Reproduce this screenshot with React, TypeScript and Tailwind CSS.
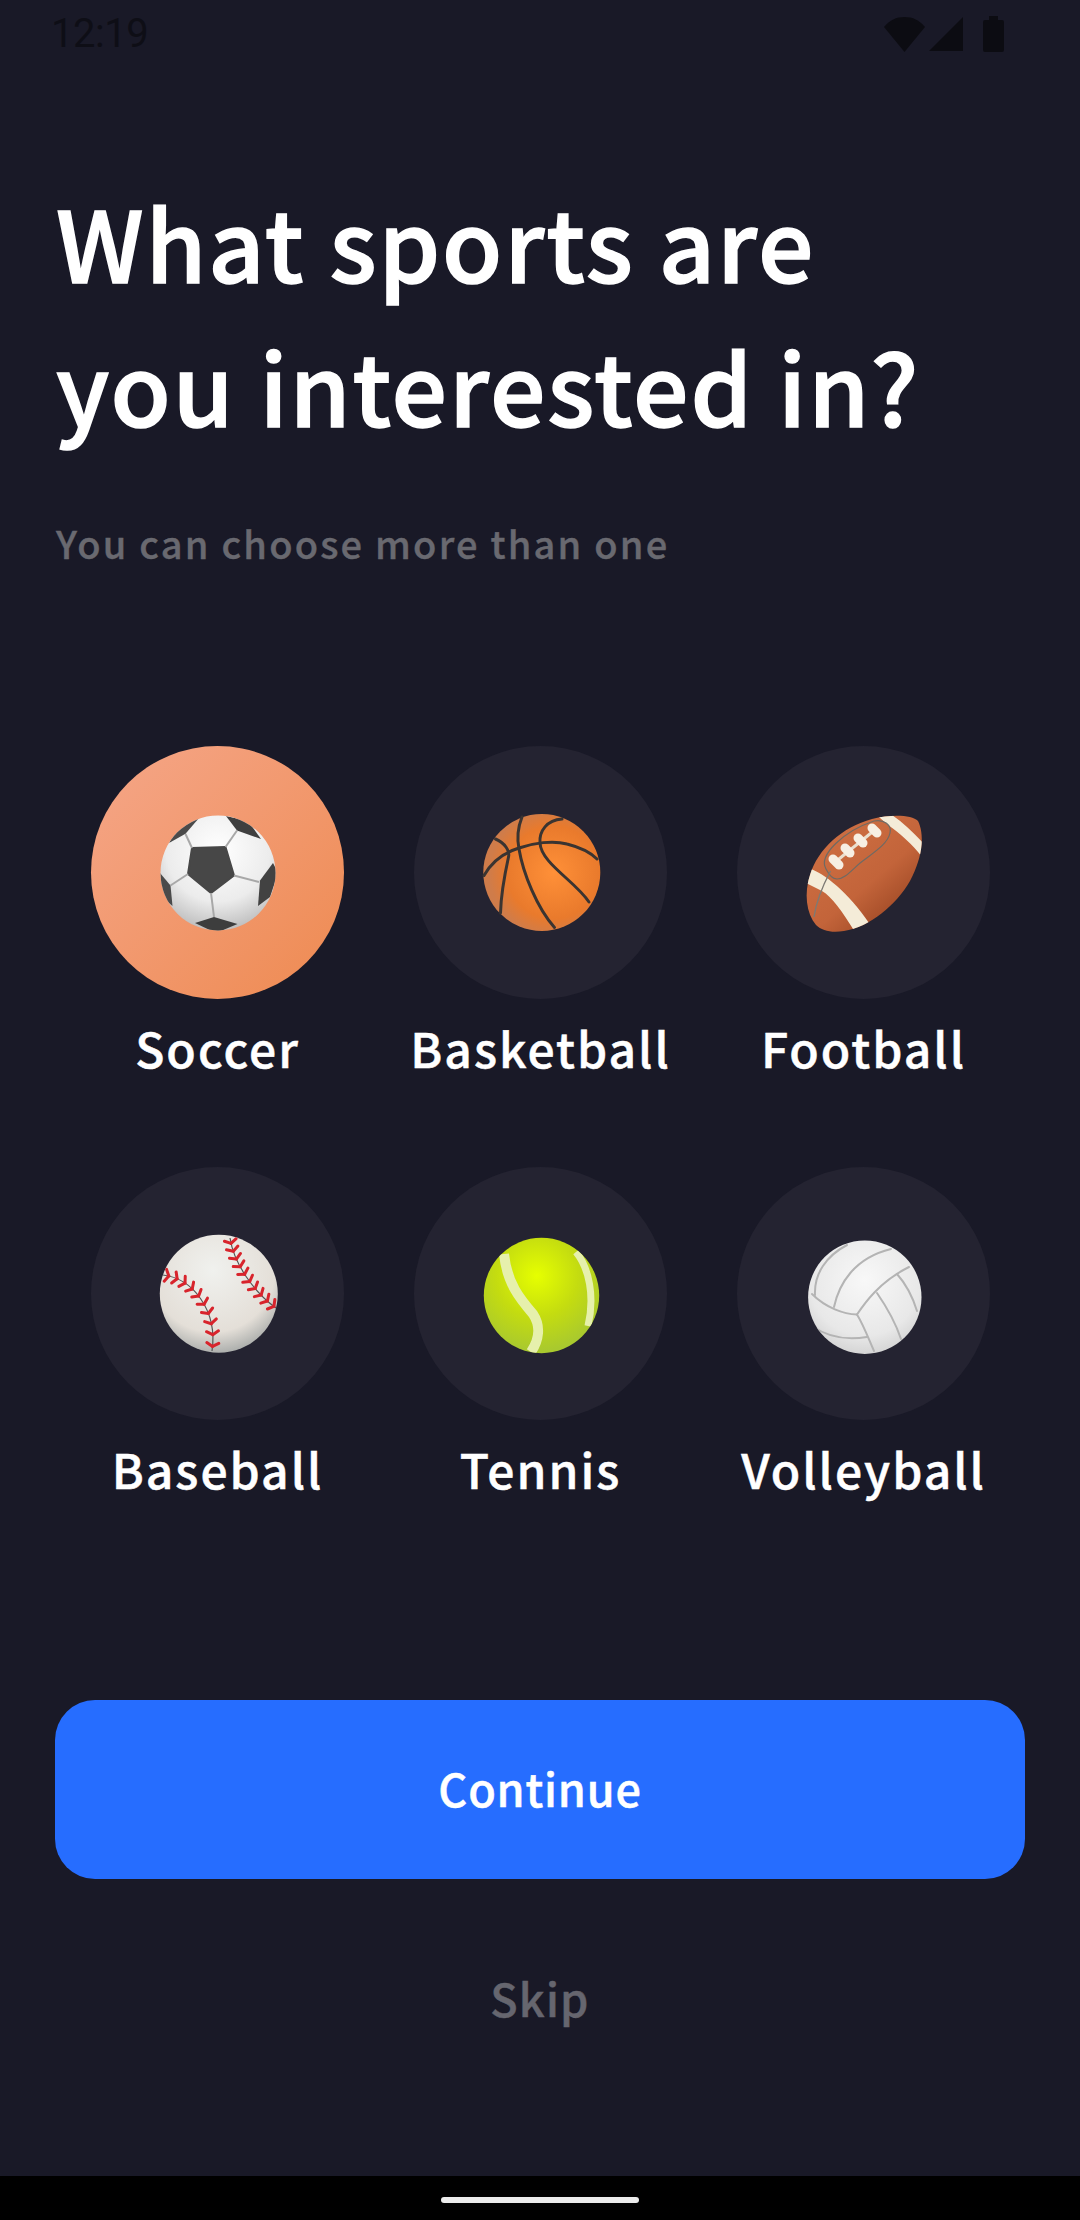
import React from "react";

function Soccer() {
  return (
    <svg viewBox="0 0 120 120" className="w-[120px] h-[120px] blur-[0.5px]">
      <defs>
        <radialGradient id="sg" cx="50%" cy="30%" r="75%">
          <stop offset="0%" stopColor="#ffffff" />
          <stop offset="60%" stopColor="#ececec" />
          <stop offset="100%" stopColor="#b5b5b5" />
        </radialGradient>
        <clipPath id="sc"><circle cx="60" cy="60" r="57.5" /></clipPath>
      </defs>
      <circle cx="60" cy="60" r="57.5" fill="url(#sg)" />
      <g clipPath="url(#sc)">
        <path d="M34 35 L67.5 34 L76 62.5 L53 80 L30 61 Z" fill="#474747" stroke="#474747" strokeWidth="2" strokeLinejoin="round" />
        <path d="M68 3 L79 17.5 L103 26 L90 8 Z" fill="#3f3f3f" />
        <path d="M41 5 L27.5 20.8 L11 30 L22 8 Z" fill="#4a4a4a" />
        <path d="M115 50 L102 67.5 L100 93 L112 84 L120 60 Z" fill="#424242" />
        <path d="M2 60 L12.5 72.5 L14.5 93 L4 84 Z" fill="#4a4a4a" />
        <path d="M37 110 L56 104 L79.5 111 L58 120 Z" fill="#3d3d3d" />
        <g stroke="#a8a8a8" strokeWidth="2" fill="none">
          <path d="M34 35 L27.5 21" />
          <path d="M67.5 34 L79 17.5" />
          <path d="M76 62.5 L101 69" />
          <path d="M53 80 L56 104" />
          <path d="M30 61 L12.5 72.5" />
        </g>
      </g>
    </svg>
  );
}

function Basketball() {
  return (
    <svg viewBox="0 0 120 120" className="w-[120px] h-[120px] blur-[0.4px]">
      <defs>
        <radialGradient id="bg" cx="60%" cy="50%" r="55%">
          <stop offset="0%" stopColor="#ff9038" />
          <stop offset="72%" stopColor="#e97a2c" />
          <stop offset="100%" stopColor="#cf7c4a" />
        </radialGradient>
      </defs>
      <circle cx="60.8" cy="59.5" r="58.5" fill="url(#bg)" />
      <g stroke="#3a3431" strokeWidth="3" fill="none" strokeLinecap="round">
        <path d="M3 62.5 C 10 50, 22 40, 38 35 C 52 30, 72 27, 86 31 C 98 34, 108 38, 116 46" />
        <path d="M41 4 C 37 14, 36 26, 38 36 C 42 60, 56 95, 73.5 114.5" />
        <path d="M81 6 C 66 7, 58 18, 59 30 C 60 50, 94 68, 108 89" />
        <path d="M14.5 26 C 24 30, 29 38, 27.5 44 C 24 60, 20 80, 19.5 100" />
      </g>
    </svg>
  );
}

const footballShape = "M12 112 C 2 100, 0 80, 6 62 C 14 36, 38 14, 68 6 C 88 1, 108 2, 114 8 C 120 20, 120 42, 106 68 C 92 92, 66 114, 40 118 C 28 120, 18 118, 12 112 Z";

function FootballBall() {
  return (
    <svg viewBox="0 0 120 120" className="w-[120px] h-[120px] blur-[0.4px]">
      <defs>
        <linearGradient id="fg" x1="20%" y1="15%" x2="80%" y2="85%">
          <stop offset="0%" stopColor="#cd6e42" />
          <stop offset="60%" stopColor="#c3643a" />
          <stop offset="100%" stopColor="#a04a26" />
        </linearGradient>
        <clipPath id="fc"><path d={footballShape} /></clipPath>
      </defs>
      <path d={footballShape} fill="url(#fg)" />
      <g clipPath="url(#fc)">
        <path d="M2 54 L4 54.8 C 20 60, 45 80, 65 110 L70 120 L52 120 L50 117.5 C 38 98, 28 84, 18 78 L0 69 Z" fill="#f4ecd8" />
        <path d="M71.5 1 L86.5 1 C 100 10, 112 22, 122 33 L122 50 C 112 34, 98 22, 84 12 Z" fill="#f4ecd8" />
        <path d="M22 56 C 14 42, 40 18, 70 8 C 80 6, 88 12, 86 20 C 84 30, 72 38, 60 47 C 50 54, 42 66, 33 66 C 28 66, 24 60, 22 56" fill="none" stroke="#6e6a64" strokeWidth="1.2" />
        <path d="M26.5 58 C 18 74, 12 90, 10 104" fill="none" stroke="#7d7a74" strokeWidth="1.4" />
        <path d="M30 50 L72 16" stroke="#eadfce" strokeWidth="3" />
        <g stroke="#f7efe3" strokeWidth="9" strokeLinecap="round">
          <path d="M29 46 L35 52" />
          <path d="M41 35 L46 40" />
          <path d="M54 25 L59 30" />
          <path d="M68 15 L73 20" />
        </g>
      </g>
    </svg>
  );
}

function bezierPoints(p: number[], n: number) {
  const out: { x: number; y: number; a: number }[] = [];
  for (let i = 0; i < n; i++) {
    const t = (i + 0.5) / n;
    const u = 1 - t;
    const x = u * u * u * p[0] + 3 * u * u * t * p[2] + 3 * u * t * t * p[4] + t * t * t * p[6];
    const y = u * u * u * p[1] + 3 * u * u * t * p[3] + 3 * u * t * t * p[5] + t * t * t * p[7];
    const dx = 3 * u * u * (p[2] - p[0]) + 6 * u * t * (p[4] - p[2]) + 3 * t * t * (p[6] - p[4]);
    const dy = 3 * u * u * (p[3] - p[1]) + 6 * u * t * (p[5] - p[3]) + 3 * t * t * (p[7] - p[5]);
    out.push({ x, y, a: Math.atan2(dy, dx) });
  }
  return out;
}

function Baseball() {
  const left = [5, 41, 34, 44, 60, 76, 54, 117];
  const right = [72, 4, 76, 30, 96, 58, 118, 74];
  const stitches = (p: number[], key: string) =>
    bezierPoints(p, 10).map((s, i) => {
      const nx = -Math.sin(s.a);
      const ny = Math.cos(s.a);
      const tx = Math.cos(s.a);
      const ty = Math.sin(s.a);
      return (
        <g key={key + i} stroke="#d8242c" strokeWidth="3" strokeLinecap="round">
          <line x1={s.x + nx * 6 - tx * 2} y1={s.y + ny * 6 - ty * 2} x2={s.x + tx * 1.5} y2={s.y + ty * 1.5} />
          <line x1={s.x - nx * 6 - tx * 2} y1={s.y - ny * 6 - ty * 2} x2={s.x + tx * 1.5} y2={s.y + ty * 1.5} />
        </g>
      );
    });
  return (
    <svg viewBox="0 0 120 120" className="w-[120px] h-[120px] blur-[0.5px]">
      <defs>
        <radialGradient id="bag" cx="45%" cy="30%" r="75%">
          <stop offset="0%" stopColor="#f0f1ee" />
          <stop offset="70%" stopColor="#e4dfd8" />
          <stop offset="100%" stopColor="#9fa3a2" />
        </radialGradient>
        <clipPath id="bac"><circle cx="60.8" cy="59.8" r="59" /></clipPath>
      </defs>
      <circle cx="60.8" cy="59.8" r="59" fill="url(#bag)" />
      <g clipPath="url(#bac)">
        <path d="M5 41 C 34 44, 60 76, 54 117" fill="none" stroke="#555" strokeWidth="1.2" />
        <path d="M72 4 C 76 30, 96 58, 118 74" fill="none" stroke="#555" strokeWidth="1.2" />
        {stitches(left, "l")}
        {stitches(right, "r")}
      </g>
    </svg>
  );
}

function Tennis() {
  return (
    <svg viewBox="0 0 120 120" className="w-[120px] h-[120px] blur-[0.5px]">
      <defs>
        <radialGradient id="tg" cx="46%" cy="33%" r="65%">
          <stop offset="0%" stopColor="#e6ff00" />
          <stop offset="55%" stopColor="#c4dc10" />
          <stop offset="100%" stopColor="#a9c92e" />
        </radialGradient>
        <clipPath id="tc"><circle cx="60.5" cy="61.5" r="57.7" /></clipPath>
      </defs>
      <circle cx="60.5" cy="61.5" r="57.7" fill="url(#tg)" />
      <g clipPath="url(#tc)" fill="none" stroke="#e6f0ac" strokeLinecap="butt">
        <path d="M23 20 C 26 50, 40 66, 52 80 C 60 92, 58 106, 50 118" strokeWidth="10" />
        <path d="M95 18 C 108 34, 114 62, 107 92" strokeWidth="7" />
      </g>
    </svg>
  );
}

function Volleyball() {
  return (
    <svg viewBox="0 0 120 120" className="w-[120px] h-[120px] blur-[0.5px]">
      <defs>
        <radialGradient id="vg" cx="50%" cy="35%" r="70%">
          <stop offset="0%" stopColor="#f8f8f8" />
          <stop offset="70%" stopColor="#e8e8e8" />
          <stop offset="100%" stopColor="#cfcfcf" />
        </radialGradient>
        <clipPath id="vc"><circle cx="60.8" cy="63.2" r="56.7" /></clipPath>
      </defs>
      <circle cx="60.8" cy="63.2" r="56.7" fill="url(#vg)" />
      <g clipPath="url(#vc)" fill="none" stroke="#b4b4b4" strokeWidth="2" strokeLinecap="round">
        <path d="M53 80.5 C 60 70, 75 48, 105 33" />
        <path d="M53 80.5 C 40 80, 22 74, 8 60" />
        <path d="M53 80.5 C 60 92, 65 106, 70 117" />
        <path d="M30 73 C 35 50, 50 24, 87 15" />
        <path d="M11 61 C 10 40, 22 22, 43 11" />
        <path d="M73 59 C 82 72, 92 90, 97 105" />
        <path d="M93 40 C 102 50, 109 64, 113 77" />
        <path d="M8 92 C 25 104, 45 106, 63 103" />
      </g>
    </svg>
  );
}

const sports = [
  { name: "Soccer", Icon: Soccer, active: true },
  { name: "Basketball", Icon: Basketball, active: false },
  { name: "Football", Icon: FootballBall, active: false },
  { name: "Baseball", Icon: Baseball, active: false },
  { name: "Tennis", Icon: Tennis, active: false },
  { name: "Volleyball", Icon: Volleyball, active: false },
];

export default function App() {
  return (
    <div className="w-[1080px] h-[2220px] bg-[#191927] flex flex-col font-['Noto_Sans_CJK_KR','Noto_Sans',sans-serif] overflow-hidden">
      <div className="h-[68px] pl-[51px] pr-[76px] flex items-center justify-between shrink-0">
        <span className="font-['Roboto',sans-serif] text-[40px] leading-[68px] text-[#0e0e16] tracking-[-0.5px]">12:19</span>
        <div className="flex items-center">
          <svg viewBox="0 0 41 35" className="w-[41px] h-[35px]"><path d="M0 10 C 6 3 12 0 20.5 0 C 29 0 35 3 41 10 L20.5 35 Z" fill="#0c0c12" /></svg>
          <svg viewBox="0 0 34 34" className="w-[34px] h-[34px] ml-[4px]"><path d="M34 0 V34 H0 Z" fill="#0c0c12" /></svg>
          <svg viewBox="0 0 21 36" className="w-[21px] h-[36px] ml-[20px]"><path d="M6 0 H15 V4 H19 A2 2 0 0 1 21 6 V34 A2 2 0 0 1 19 36 H2 A2 2 0 0 1 0 34 V6 A2 2 0 0 1 2 4 H6 Z" fill="#0c0c12" /></svg>
        </div>
      </div>

      <div className="pl-[56px] pt-[100px]">
        <h1 className="text-[98px] leading-[144px] font-medium tracking-[1.9px] [-webkit-text-stroke:1.5px_white] text-white m-0">What sports are<br />you interested in?</h1>
        <p className="mt-[60px] text-[38px] leading-[54px] font-medium tracking-[2.2px] [-webkit-text-stroke:0.4px_#696970] text-[#696970]">You can choose more than one</p>
      </div>

      <div className="grid grid-cols-[253px_253px_253px] gap-x-[70px] gap-y-[84px] pl-[91px] mt-[176px]">
        {sports.map(({ name, Icon, active }) => (
          <div key={name} className="flex flex-col items-center">
            <div className={active
              ? "w-[253px] h-[253px] rounded-full flex items-center justify-center bg-gradient-to-br from-[#f5a688] to-[#ee8a50]"
              : "w-[253px] h-[253px] rounded-full flex items-center justify-center bg-[#242331]"}>
              <Icon />
            </div>
            <span className="mt-[12px] text-[48px] leading-[72px] font-medium tracking-[2px] [-webkit-text-stroke:0.5px_white] text-white whitespace-nowrap">{name}</span>
          </div>
        ))}
      </div>

      <div className="px-[55px] mt-[196px]">
        <div className="h-[179px] pb-[4px] rounded-[40px] bg-[#266dff] flex items-center justify-center text-[45px] font-medium tracking-[0.8px] [-webkit-text-stroke:0.5px_white] text-white">Continue</div>
      </div>
      <div className="mt-[85px] text-center text-[45px] leading-[68px] font-medium tracking-[1.2px] [-webkit-text-stroke:0.5px_#66666f] text-[#66666f]">Skip</div>

      <div className="mt-auto h-[44px] bg-black flex justify-center pt-[21px] shrink-0">
        <div className="w-[198px] h-[6px] rounded-full bg-[#ececec]" />
      </div>
    </div>
  );
}
